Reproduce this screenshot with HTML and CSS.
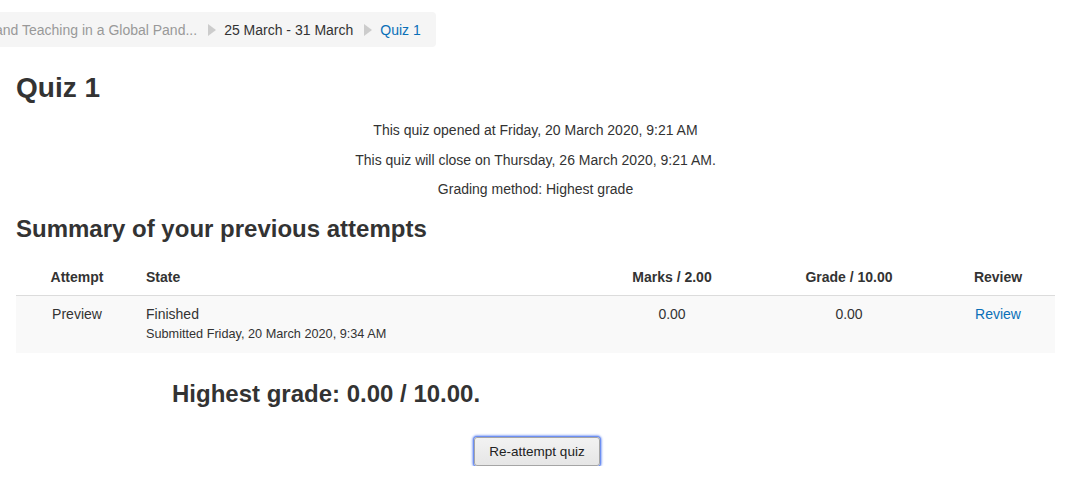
FILE: index.html
```html
<!DOCTYPE html>
<html lang="en">
  <head>
    <meta charset="UTF-8" />
    <title>Quiz 1</title>
    <link rel="stylesheet" href="styles.css">
  </head>
  <body>
    <div class="page">
      <nav class="breadcrumb">
        <a class="crumb crumb-muted" href="#">and Teaching in a Global Pand...</a>
        <span class="sep"></span>
        <a class="crumb" href="#">25 March - 31 March</a>
        <span class="sep"></span>
        <a class="crumb crumb-current" href="#">Quiz 1</a>
      </nav>

      <h1>Quiz 1</h1>

      <div class="quizinfo">
        <p>This quiz opened at Friday, 20 March 2020, 9:21 AM</p>
        <p>This quiz will close on Thursday, 26 March 2020, 9:21 AM.</p>
        <p>Grading method: Highest grade</p>
      </div>

      <h2>Summary of your previous attempts</h2>

      <table class="attempts">
        <colgroup>
          <col class="c-attempt" />
          <col class="c-state" />
          <col class="c-marks" />
          <col class="c-grade" />
          <col class="c-review" />
        </colgroup>
        <thead>
          <tr>
            <th class="center">Attempt</th>
            <th>State</th>
            <th class="center">Marks / 2.00</th>
            <th class="center">Grade / 10.00</th>
            <th class="center">Review</th>
          </tr>
        </thead>
        <tbody>
          <tr>
            <td class="center">Preview</td>
            <td>Finished<span class="statedetails">Submitted Friday, 20 March 2020, 9:34 AM</span></td>
            <td class="center">0.00</td>
            <td class="center">0.00</td>
            <td class="center"><a href="#">Review</a></td>
          </tr>
        </tbody>
      </table>

      <h3>Highest grade: 0.00 / 10.00.</h3>

      <div class="buttons">
        <button type="button">Re-attempt quiz</button>
      </div>
    </div>
  </body>
</html>
```

FILE: styles.css
```css
body {
  margin: 0;
  font-family: "Liberation Sans", Arial, sans-serif;
  font-size: 14px;
  color: #333;
  background: #fff;
  overflow: hidden;
}
a {
  color: #0a70b8;
  text-decoration: none;
}
.page {
  padding: 12px 12px 0 16px;
}
.breadcrumb {
  display: inline-flex;
  align-items: center;
  height: 35px;
  margin-left: -21px;
  padding: 0 15px 0 0;
  background: #f5f5f5;
  border-radius: 0 4px 4px 0;
}
.crumb {
  color: #333;
  white-space: nowrap;
}
.crumb-muted {
  color: #999;
}
.crumb-current {
  color: #0a70b8;
}
.sep {
  width: 0;
  height: 0;
  margin: 0 8px 0 11px;
  border-left: 8px solid #ccc;
  border-top: 6px solid transparent;
  border-bottom: 6px solid transparent;
}
h1 {
  margin: 24px 0 15px;
  font-size: 28px;
  line-height: 34px;
  font-weight: bold;
}
.quizinfo {
  text-align: center;
}
.quizinfo p {
  margin: 0 0 9.5px;
  line-height: 20px;
}
h2 {
  margin: 15px 0 17px;
  font-size: 24px;
  line-height: 29px;
  font-weight: bold;
}
.attempts {
  width: 100%;
  table-layout: fixed;
  border-collapse: collapse;
}
.c-attempt { width: 122px; }
.c-state { width: 449px; }
.c-marks { width: 170px; }
.c-grade { width: 184px; }
.c-review { width: 114px; }
.attempts th {
  padding: 9px 8px;
  line-height: 17px;
  text-align: left;
  font-weight: bold;
  border-bottom: 1px solid #dcdcdc;
}
.attempts td {
  padding: 10px 8px 10px;
  line-height: 17px;
  vertical-align: top;
  background: #f9f9f9;
}
.attempts .center {
  text-align: center;
}
.statedetails {
  display: block;
  margin-top: 3px;
  font-size: 12.7px;
  line-height: 17px;
}
h3 {
  margin: 26px 0 0 156px;
  font-size: 24px;
  line-height: 29px;
  font-weight: bold;
}
.buttons {
  display: flex;
  justify-content: center;
  padding: 29px 0 0 3px;
}
button {
  height: 29px;
  padding: 0 14px;
  font-family: "Liberation Sans", Arial, sans-serif;
  font-size: 13.5px;
  color: #222;
  background: linear-gradient(#f2f2f2, #e6e6e6);
  border: 1px solid #a5a5a5;
  border-radius: 3px;
  box-shadow: 0 0 0 1px #6d8ff2, 0 0 2px 2px rgba(85, 125, 240, 0.6);
  cursor: pointer;
}
```
